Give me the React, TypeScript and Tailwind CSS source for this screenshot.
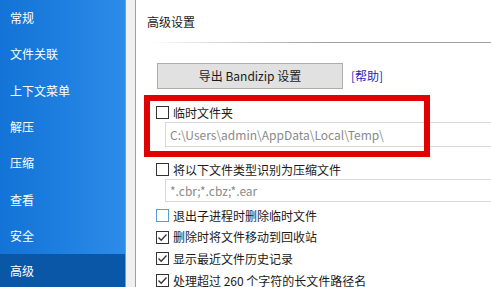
import React from "react";

const font = { fontFamily: '"Noto Sans CJK SC", "Microsoft YaHei", "Liberation Sans", sans-serif' };

const navItems = ["常规", "文件关联", "上下文菜单", "解压", "压缩", "查看", "安全", "高级"];

function Check({ checked, blue }: { checked?: boolean; blue?: boolean }) {
  return (
    <span
      className={`w-[13px] h-[13px] flex items-center justify-center bg-white border shrink-0 ${
        blue ? "border-[#5b9bd5]" : "border-[#333333]"
      }`}
    >
      {checked && (
        <svg width="11" height="11" viewBox="0 0 11 11">
          <path d="M1.5 5.5 L4.2 8.3 L9.5 2.5" fill="none" stroke="#333" strokeWidth="1.3" />
        </svg>
      )}
    </span>
  );
}

export default function App() {
  return (
    <div className="w-[491px] h-[287px] flex overflow-hidden bg-white text-[12px] text-[#1a1a1a]" style={font}>
      <div className="w-[126px] h-full shrink-0 flex flex-col bg-gradient-to-r from-[#1473d6] via-[#1d7fe0] to-[#2e8ce8] border-r border-[#5aa6ee]">
        {navItems.map((t, i) => (
          <div
            key={t}
            className={`shrink-0 flex items-center pl-[10px] text-white leading-none ${
              i === navItems.length - 1 ? "bg-[#0a57a8] h-[33px]" : "h-[36.3px]"
            }`}
          >
            {t}
          </div>
        ))}
      </div>
      <div className="w-[10px] h-full shrink-0 bg-[#f0f0f0] border-r border-[#a0a0a0]" />
      <div className="flex-1 flex flex-col pl-[10px] min-w-0">
        <div className="h-[42px] shrink-0 flex items-end pb-[14px] leading-none pl-[1px]">高级设置</div>
        <div className="h-px shrink-0 bg-gradient-to-r from-[#ffffff] via-[#a0a0a0] to-[#a0a0a0] w-[360px] ml-[1px]" />
        <div className="flex shrink-0 items-center mt-[20px] ml-[11px] gap-[8px]">
          <div className="w-[186px] h-[26px] bg-[#e1e1e1] border border-[#adadad] flex items-center justify-center leading-none">
            导出 Bandizip 设置
          </div>
          <span className="text-[#1a2bb8] leading-none">[帮助]</span>
        </div>
        <div className="relative shrink-0 mt-[6px] flex flex-col">
          <div className="absolute left-[-2px] top-0 w-[286px] h-[62px] border-[6px] border-[#e30000] pointer-events-none z-10" />
          <div className="flex shrink-0 items-center gap-[4px] ml-[10px] mt-[11px] leading-none">
            <Check />
            <span>临时文件夹</span>
          </div>
          <div className="shrink-0 ml-[19px] mt-[3px] h-[25px] border border-[#d9d9d9] border-r-0 flex items-center pl-[4px] text-[#8a8a8a] leading-none">
            C:\Users\admin\AppData\Local\Temp\
          </div>
          <div className="flex shrink-0 items-center gap-[4px] ml-[10px] mt-[16px] leading-none">
            <Check />
            <span>将以下文件类型识别为压缩文件</span>
          </div>
          <div className="shrink-0 ml-[19px] mt-[3px] h-[23px] border border-[#d9d9d9] border-r-0 flex items-center pl-[4px] text-[#8a8a8a] leading-none">
            *.cbr;*.cbz;*.ear
          </div>
          <div className="flex shrink-0 flex-col ml-[10px] mt-[7px] gap-[8.7px] leading-none">
            <div className="flex items-center gap-[4px]">
              <Check blue />
              <span>退出子进程时删除临时文件</span>
            </div>
            <div className="flex items-center gap-[4px]">
              <Check checked />
              <span>删除时将文件移动到回收站</span>
            </div>
            <div className="flex items-center gap-[4px]">
              <Check checked />
              <span>显示最近文件历史记录</span>
            </div>
            <div className="flex items-center gap-[4px]">
              <Check checked />
              <span>处理超过 260 个字符的长文件路径名</span>
            </div>
          </div>
        </div>
      </div>
    </div>
  );
}
